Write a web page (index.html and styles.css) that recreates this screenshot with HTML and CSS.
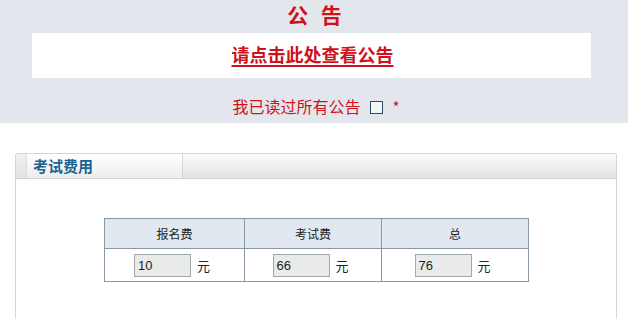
FILE: index.html
```html
<!DOCTYPE html>
<html lang="zh">
<head>
<meta charset="utf-8">
<link rel="stylesheet" href="styles.css">
</head>
<body>
<div class="notice">
  <h1 class="title">公&nbsp;&nbsp;告</h1>
  <div class="linkbox"><a class="link" href="#">请点击此处查看公告</a></div>
  <div class="agree">我已读过所有公告 <span class="chk"></span> <span class="star">*</span></div>
</div>
<div class="panel">
  <div class="panel-head">
    <div class="tab-edge"></div>
    <div class="tab">考试费用</div>
  </div>
  <div class="panel-body">
    <table class="fees">
      <tr>
        <th class="c1">报名费</th>
        <th class="c2">考试费</th>
        <th class="c3">总</th>
      </tr>
      <tr>
        <td><span class="inp">10</span><span class="unit">元</span></td>
        <td><span class="inp">66</span><span class="unit">元</span></td>
        <td><span class="inp">76</span><span class="unit">元</span></td>
      </tr>
    </table>
  </div>
</div>
</body>
</html>
```
FILE: styles.css
```css
html, body {
  margin: 0;
  padding: 0;
  background: #ffffff;
  font-family: "Noto Sans CJK SC", "Liberation Sans", sans-serif;
  overflow: hidden;
}
.notice {
  background: #e3e7ed;
  height: 123px;
  box-sizing: border-box;
  padding-top: 0;
  overflow: hidden;
}
.title {
  margin: 0;
  text-align: center;
  font-size: 21px;
  line-height: 28px;
  font-weight: bold;
  color: #d0121b;
  padding-left: 2px;
  letter-spacing: 1px;
}
.linkbox {
  background: #ffffff;
  margin: 5px 37px 0 32px;
  height: 45px;
  display: flex;
  align-items: center;
  justify-content: center;
}
.link {
  color: #d0121b;
  font-size: 18px;
  font-weight: bold;
  text-decoration: underline;
  text-underline-offset: 3px;
  text-decoration-thickness: 2px;
  margin-left: 2px;
  margin-top: -3px;
}
.agree {
  margin-top: 17px;
  text-align: center;
  color: #d0121b;
  font-size: 16px;
  line-height: 22px;
  padding-left: 4px;
}
.chk {
  display: inline-block;
  width: 11px;
  height: 11px;
  border: 1px solid #2b4a6a;
  background: #f4f6f8;
  vertical-align: -1px;
  margin: 0 6px 0 6px;
}
.star {
  font-size: 15px;
}
.panel {
  margin: 30px 11px 0 15px;
  border: 1px solid #d6d6d6;
  border-bottom: none;
  border-radius: 3px 3px 0 0;
  height: 166px;
}
.panel-head {
  display: flex;
  height: 24px;
  border-bottom: 1px solid #d2d2d2;
  background: linear-gradient(#fafafa, #f2f2f2 40%, #e2e2e2);
}
.tab-edge {
  width: 10px;
  border-right: 1px solid #dcdcdc;
  background: linear-gradient(#f0f0f0, #e4e4e4);
}
.tab {
  box-sizing: border-box;
  width: 156px;
  border-right: 1px solid #d6d6d6;
  background: linear-gradient(#ffffff, #f6f6f6 50%, #ececec);
  color: #1a6394;
  font-weight: bold;
  font-size: 15px;
  line-height: 24px;
  padding-left: 6px;
}
.panel-body {
  padding: 39px 0 0 88px;
}
.fees {
  border-collapse: collapse;
  width: 425px;
  font-size: 12px;
  color: #222;
}
.fees th, .fees td {
  border: 1px solid #8a98a6;
  text-align: center;
  padding: 0;
}
.fees th {
  background: #e1e8f0;
  font-weight: normal;
  height: 29px;
}
.c1 { width: 139px; }
.c2 { width: 136px; }
.fees td {
  height: 32px;
  background: #ffffff;
}
.inp {
  display: inline-block;
  width: 52px;
  height: 21px;
  border: 1px solid #a2a8ae;
  background: #e9ebea;
  text-align: left;
  padding-left: 3px;
  font-family: "Liberation Sans", sans-serif;
  font-size: 13px;
  line-height: 21px;
  vertical-align: middle;
  box-sizing: content-box;
}
.unit {
  display: inline-block;
  margin-left: 6px;
  font-size: 13px;
  vertical-align: middle;
  width: 18px;
  text-align: left;
}
```
